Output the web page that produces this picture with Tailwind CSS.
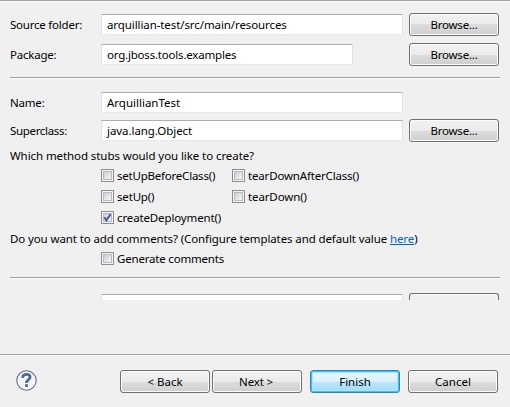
<!DOCTYPE html>
<html lang="en">
<head>
<meta charset="utf-8">
<title>New Arquillian Test</title>
<script src="https://cdn.jsdelivr.net/npm/@tailwindcss/browser@4"></script>
</head>
<body class="w-[510px] h-[407px] overflow-hidden bg-[#f0f0f0] font-['Noto_Sans','Open_Sans',sans-serif] text-[11.5px] leading-[17px] text-black whitespace-nowrap">
<svg class="hidden">
  <symbol id="tick" viewBox="0 0 13 13"><path d="M3.4 6.2 L5.4 9.3 L9.5 3.1" fill="none" stroke="#4b5f98" stroke-width="2"/></symbol>
</svg>
<main class="flex flex-col h-[407px]">
  <div class="h-0.5 shrink-0 border-t border-[#a0a0a0] bg-white"></div>

  <form class="h-[352px] shrink-0 pl-[10px] pt-[11px]">
    <div class="flex items-center h-[23px]">
      <label class="w-[91px] tracking-[-0.22px]">Source folder:</label>
      <div class="w-[302px] h-[21px] mr-[6px] pl-[5px] leading-[20px] tracking-[-0.09px] bg-white border border-t-[#abadb3] border-x-[#e2e3ea] border-b-[#e3e9ef]">arquillian-test/src/main/resources</div>
      <button type="button" class="w-[90px] h-[23px] pb-px tracking-[-0.22px] rounded-[3px] border border-[#707070] bg-[linear-gradient(#f2f2f2,#ebebeb_50%,#dddddd_50%,#cfcfcf)] shadow-[inset_0_0_0_1px_#fbfbfb]">Browse...</button>
    </div>
    <div class="flex items-center h-[23px] mt-[7px]">
      <label class="w-[91px] tracking-[-0.22px]">Package:</label>
      <div class="w-[252px] h-[21px] mr-[56px] pl-[5px] leading-[20px] tracking-[-0.2px] bg-white border border-t-[#abadb3] border-x-[#e2e3ea] border-b-[#e3e9ef]">org.jboss.tools.examples</div>
      <button type="button" class="w-[90px] h-[23px] pb-px tracking-[-0.22px] rounded-[3px] border border-[#707070] bg-[linear-gradient(#f2f2f2,#ebebeb_50%,#dddddd_50%,#cfcfcf)] shadow-[inset_0_0_0_1px_#fbfbfb]">Browse...</button>
    </div>

    <div class="w-[490px] h-0.5 mt-[11px] border-t border-[#a0a0a0] bg-white"></div>

    <div class="flex items-center h-[21px] mt-[13px]">
      <label class="w-[91px] tracking-[-0.2px]">Name:</label>
      <div class="w-[302px] h-[21px] pl-[5px] leading-[20px] bg-white border border-t-[#abadb3] border-x-[#e2e3ea] border-b-[#e3e9ef]">ArquillianTest</div>
    </div>
    <div class="flex items-center h-[23px] mt-[6px]">
      <label class="w-[91px] tracking-[-0.33px]">Superclass:</label>
      <div class="w-[302px] h-[21px] mr-[6px] pl-[5px] leading-[20px] tracking-[-0.06px] bg-white border border-t-[#abadb3] border-x-[#e2e3ea] border-b-[#e3e9ef]">java.lang.Object</div>
      <button type="button" class="w-[90px] h-[23px] pb-px tracking-[-0.22px] rounded-[3px] border border-[#707070] bg-[linear-gradient(#f2f2f2,#ebebeb_50%,#dddddd_50%,#cfcfcf)] shadow-[inset_0_0_0_1px_#fbfbfb]">Browse...</button>
    </div>

    <p class="mt-[5px] h-[17px]"><span class="tracking-[-0.08px]">Which method stubs would you like to create?</span></p>

    <div class="grid grid-cols-[131px_auto] auto-rows-[21px] items-center ml-[91px] mt-px">
      <label class="flex items-center gap-[3px]"><i class="size-[13px] border border-[#8e8f8f] p-px bg-[#f4f4f4]"><i class="block size-[9px] border border-[#b8bcc2] bg-linear-to-br from-[#cbcfd5] to-[#f6f6f6]"></i></i><span class="tracking-[-0.22px]">setUpBeforeClass()</span></label>
      <label class="flex items-center gap-[3px]"><i class="size-[13px] border border-[#8e8f8f] p-px bg-[#f4f4f4]"><i class="block size-[9px] border border-[#b8bcc2] bg-linear-to-br from-[#cbcfd5] to-[#f6f6f6]"></i></i><span class="tracking-[-0.17px]">tearDownAfterClass()</span></label>
      <label class="flex items-center gap-[3px]"><i class="size-[13px] border border-[#8e8f8f] p-px bg-[#f4f4f4]"><i class="block size-[9px] border border-[#b8bcc2] bg-linear-to-br from-[#cbcfd5] to-[#f6f6f6]"></i></i><span class="tracking-[-0.17px]">setUp()</span></label>
      <label class="flex items-center gap-[3px]"><i class="size-[13px] border border-[#8e8f8f] p-px bg-[#f4f4f4]"><i class="block size-[9px] border border-[#b8bcc2] bg-linear-to-br from-[#cbcfd5] to-[#f6f6f6]"></i></i><span class="tracking-[-0.12px]">tearDown()</span></label>
      <label class="flex items-center gap-[3px]"><i class="relative size-[13px] border border-[#8e8f8f] p-px bg-[#f4f4f4]"><i class="block size-[9px] border border-[#b8bcc2] bg-linear-to-br from-[#cbcfd5] to-[#f6f6f6]"></i><svg class="absolute -left-px -top-px size-[13px]"><use href="#tick"/></svg></i><span class="tracking-[-0.13px]">createDeployment()</span></label>
    </div>

    <p class="mt-[2px] h-[17px]"><span class="tracking-[-0.11px]">Do you want to add comments? (Configure templates and default value <a class="text-[#0066cc] underline">here</a>)</span></p>
    <label class="flex items-center gap-[3px] ml-[91px] mt-px h-[21px]"><i class="size-[13px] border border-[#8e8f8f] p-px bg-[#f4f4f4]"><i class="block size-[9px] border border-[#b8bcc2] bg-linear-to-br from-[#cbcfd5] to-[#f6f6f6]"></i></i><span class="tracking-[-0.19px]">Generate comments</span></label>

    <div class="w-[490px] h-0.5 mt-[8px] border-t border-[#a0a0a0] bg-white"></div>
    <div class="flex items-end h-[7px] mt-[14px] ml-[91px] gap-[6px]">
      <div class="w-[302px] h-[6px] bg-white border-t border-x border-t-[#abadb3] border-x-[#e2e3ea]"></div>
      <div class="w-[90px] h-[7px] rounded-t-[3px] border border-b-0 border-[#707070] bg-[#f1f1f1] shadow-[inset_0_1px_0_#fbfbfb]"></div>
    </div>
  </form>

  <div class="h-0.5 shrink-0 border-t border-[#a0a0a0] bg-white"></div>
  <footer class="flex items-start pt-[14px] pl-[16px]">
    <svg class="w-[21px] h-[21px] mr-[83px]" viewBox="0 0 21 21" fill="none"><circle cx="10.5" cy="10.5" r="9.7" fill="#f4f5f7" stroke="#60718f" stroke-width="1.1"/><path d="M6.6 7.9 C6.7 5.3 8 4.4 10.4 4.4 C12.9 4.4 14.1 5.5 14.1 7.2 C14.1 9.6 10.5 9.8 10.5 12.9" stroke="#536a91" stroke-width="2.8"/><path d="M9.1 14.2h2.9v2.8H9.1z" fill="#536a91"/></svg>
    <button type="button" class="w-[90px] h-[23px] mr-[2px] rounded-[3px] border border-[#707070] bg-[linear-gradient(#f2f2f2,#ebebeb_50%,#dddddd_50%,#cfcfcf)] shadow-[inset_0_0_0_1px_#fbfbfb]">&lt; Back</button>
    <button type="button" class="w-[90px] h-[23px] mr-[8px] pr-[2px] tracking-[-0.15px] rounded-[3px] border border-[#707070] bg-[linear-gradient(#f2f2f2,#ebebeb_50%,#dddddd_50%,#cfcfcf)] shadow-[inset_0_0_0_1px_#fbfbfb]">Next &gt;</button>
    <button type="button" class="w-[90px] h-[23px] mr-[8px] rounded-[3px] border border-[#3c7fb1] bg-[linear-gradient(#eaf6fd,#d9f0fc_50%,#bee6fd_50%,#a7d9f5)] shadow-[inset_0_0_0_1px_#35c8f5,inset_0_0_0_2px_#a5e6fa]">Finish</button>
    <button type="button" class="w-[90px] h-[23px] rounded-[3px] border border-[#707070] bg-[linear-gradient(#f2f2f2,#ebebeb_50%,#dddddd_50%,#cfcfcf)] shadow-[inset_0_0_0_1px_#fbfbfb]">Cancel</button>
  </footer>
</main>
</body>
</html>
